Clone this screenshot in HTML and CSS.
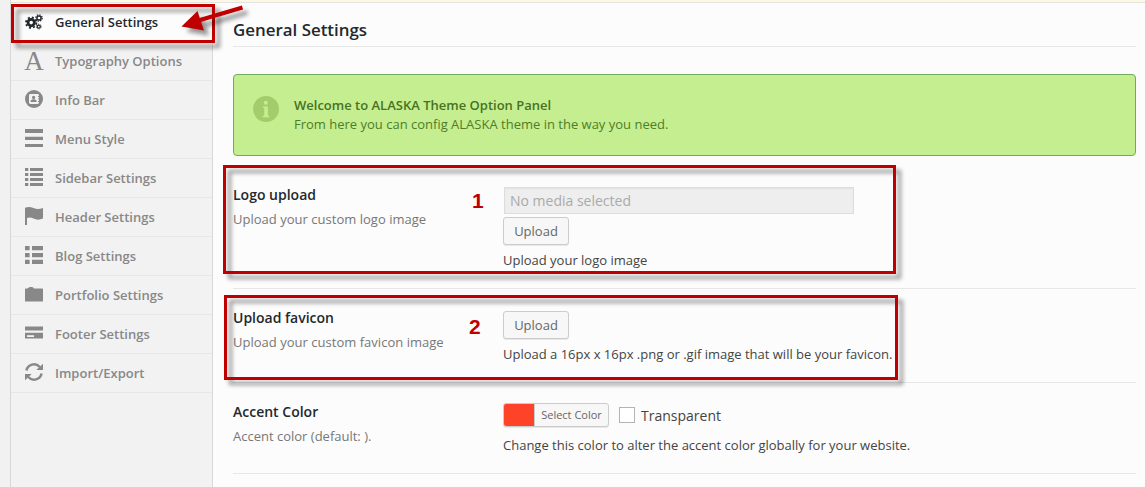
FILE: index.html
```html
<!DOCTYPE html>
<html lang="en">
<head>
<meta charset="utf-8">
<title>General Settings</title>
<link rel="stylesheet" href="styles.css">
</head>
<body>
<div class="page">
  <div class="notice-bar"></div>
  <div class="panel">
    <nav class="sidebar">
      <a class="item active"><svg class="icon" viewBox="0 0 18 18"><g fill="none" stroke="currentColor"><circle cx="6.2" cy="9.6" r="3.2" stroke-width="2.8"/><circle cx="6.2" cy="9.6" r="5.2" stroke-width="1.8" stroke-dasharray="2.05 2.034"/><circle cx="14" cy="5" r="2.1" stroke-width="1.5"/><circle cx="14" cy="5" r="3.2" stroke-width="1.3" stroke-dasharray="1.25 1.263"/><circle cx="13.8" cy="13.6" r="1.5" stroke-width="1.3"/><circle cx="13.8" cy="13.6" r="2.4" stroke-width="1" stroke-dasharray=".95 .935"/></g></svg><span>General Settings</span></a>
      <a class="item"><span class="icon letter">A</span><span>Typography Options</span></a>
      <a class="item"><svg class="icon raised" viewBox="0 0 18 18"><circle cx="9" cy="9" r="9" fill="currentColor"/><rect x="4" y="4" width="10" height="10" rx="1.4" fill="#f2f2f2"/><rect x="5.3" y="5.3" width="7" height="7.4" fill="#f2f2f2"/><circle cx="8.6" cy="7.4" r="1.6" fill="currentColor"/><path d="M5.6 12V10.4L7.7 9.2H9.5L11.6 10.4V12Z" fill="currentColor"/><path d="M13 6.5H15M13 9H15M13 11.5H15" stroke="currentColor"/></svg><span>Info Bar</span></a>
      <a class="item"><svg class="icon raised" viewBox="0 0 18 18" fill="currentColor"><path d="M0 0H18V4H0ZM0 7.7H18V11H0ZM0 15H18V18H0Z"/></svg><span>Menu Style</span></a>
      <a class="item"><svg class="icon raised" viewBox="0 0 18 18" fill="currentColor"><path d="M0 0H3.3V3H0ZM5 0H18V3H5ZM0 5H3.3V8H0ZM5 5H18V8H5ZM0 10H3.3V13H0ZM5 10H18V13H5ZM0 15H3.3V18H0ZM5 15H18V18H5Z"/></svg><span>Sidebar Settings</span></a>
      <a class="item"><svg class="icon raised" viewBox="0 0 18 18" fill="currentColor"><path d="M0 0.8C3-.4 5.5-.2 8.5 1.1C12 2.6 14.5 2.3 18 1V11.5C14.5 13 11.5 13 8.5 11.5C6 10.3 4.3 10 2 11V18H0Z"/></svg><span>Header Settings</span></a>
      <a class="item"><svg class="icon raised" viewBox="0 0 18 18" fill="currentColor"><path d="M0 0H4.6V4.2H0ZM7 0H18V4.2H7ZM0 7H4.6V11.2H0ZM7 7H18V11.2H7ZM0 13.8H4.6V18H0ZM7 13.8H18V18H7Z"/></svg><span>Blog Settings</span></a>
      <a class="item"><svg class="icon" viewBox="0 -1 18 18" fill="currentColor"><path d="M0 2.2Q0 1.5 .8 1.5H2.5L3.8.4Q4.2 0 5 0H7Q7.8 0 8.2.6L9 1.5H17.3Q18 1.5 18 2.3V14Q18 14.5 17.4 14.5H.6Q0 14.5 0 14Z"/></svg><span>Portfolio Settings</span></a>
      <a class="item"><svg class="icon raised" viewBox="0 0 18 18"><path d="M0 2.6H18V6.5H0ZM0 8.7H18V14.5H0Z" fill="currentColor"/><path d="M2 11.2H9V13H2Z" fill="#f2f2f2"/></svg><span>Footer Settings</span></a>
      <a class="item"><svg class="icon raised" viewBox="0 0 18 18"><path d="M1.4 7.5A7.7 7.7 0 0 1 14.7 4M16.6 10.5A7.7 7.7 0 0 1 3.3 14" fill="none" stroke="currentColor" stroke-width="2.5"/><path d="M18 .8V7H11.3ZM0 17.2V11H6.7Z" fill="currentColor"/></svg><span>Import/Export</span></a>
    </nav>
    <main class="main">
      <h1>General Settings</h1>
      <div class="welcome">
        <svg class="info" viewBox="0 0 26 26"><circle cx="13" cy="13" r="13" fill="#a3cc6b"/><circle cx="12.8" cy="6.7" r="2" fill="#c5ee91"/><path d="M9.8 10.4H14.8V19.5L16.3 20V21.2H9.6V20L11.3 19.5V12L9.8 11.6Z" fill="#c5ee91"/></svg>
        <div><strong>Welcome to ALASKA Theme Option Panel</strong><p>From here you can config ALASKA theme in the way you need.</p></div>
      </div>
      <section class="row logo">
        <div><h2>Logo upload</h2><p class="sub">Upload your custom logo image</p></div>
        <div class="field"><div class="media">No media selected</div><button class="upload">Upload</button><p class="desc">Upload your logo image</p></div>
      </section>
      <section class="row favicon">
        <div><h2>Upload favicon</h2><p class="sub">Upload your custom favicon image</p></div>
        <div class="field"><button class="upload">Upload</button><p class="desc">Upload a 16px x 16px .png or .gif image that will be your favicon.</p></div>
      </section>
      <section class="row accent">
        <div><h2>Accent Color</h2><p class="sub">Accent color (default: ).</p></div>
        <div class="field"><div class="picker"><button class="color"><i class="swatch"></i><span>Select Color</span></button><i class="check"></i><span>Transparent</span></div><p class="desc">Change this color to alter the accent color globally for your website.</p></div>
      </section>
    </main>
  </div>
  <div class="mark mark-nav"></div>
  <div class="mark mark-logo"></div>
  <div class="mark mark-favicon"></div>
  <svg class="arrow" viewBox="0 0 70 34"><path d="M62.5 5.5L20 18" stroke="#c00000" stroke-width="4.4"/><path d="M1.5 24.5L17.5 9L24 28.5Z" fill="#c00000"/></svg>
  <b class="num one">1</b>
  <b class="num two">2</b>
</div>
</body>
</html>
```
FILE: styles.css
```css
* { box-sizing: border-box; }
body { margin: 0; background: #f1f1f1; font: 13px/19px "Open Sans", sans-serif; color: #444; }
h1, h2, p { margin: 0; }
.page { position: relative; height: 487px; overflow: hidden; padding-left: 10px; display: flex; flex-direction: column; }
.notice-bar { height: 3px; flex: none; background: #fcf8e3; border-bottom: 1px solid #e3e3e3; border-left: 1px solid #d8d8d8; }
.panel { flex: 1; display: flex; border-left: 1px solid #d8d8d8; background: #fcfcfc; }
.sidebar { width: 202px; flex: none; background: #f2f2f2; border-right: 1px solid #d8d8d8; }
.item { height: 39px; display: flex; align-items: center; gap: 12px; padding-left: 14px; border-bottom: 1px solid #e7e7e7; color: #888; font-weight: 600; }
.item.active { background: #fcfcfc; color: #23282d; width: 202px; }
.icon { width: 18px; height: 18px; flex: none; }
.raised { margin-bottom: 2px; }
.letter { font: 27px/18px "Liberation Serif", serif; display: flex; justify-content: center; align-items: center; }
.main { flex: 1; padding: 0 9px 0 20px; }
h1 { height: 44px; padding-top: 16px; font-size: 16.9px; line-height: 22px; font-weight: 600; color: #23282d; border-bottom: 1px solid #e7e7e7; }
.welcome { display: flex; gap: 15px; height: 82px; margin-top: 27px; padding: 21px 19px 0; border: 1px solid #6eac5c; border-radius: 4px; background: #c5ee91; color: #4f7d26; }
.info { width: 26px; height: 26px; flex: none; }
.welcome strong { display: block; font-weight: 600; color: #467321; }
.row { display: grid; grid-template-columns: 270px 1fr; border-bottom: 1px solid #e7e7e7; }
.logo { height: 133px; padding-top: 31px; }
.favicon { height: 94px; padding-top: 22px; }
.favicon h2 { margin-top: -1px; }
.accent { height: 91px; padding-top: 20px; }
.accent h2 { margin-top: 1px; }
h2 { font-size: 14px; line-height: 16px; font-weight: 600; color: #23282d; }
.sub { margin-top: 7px; color: #777; letter-spacing: .02px; }
.accent .sub { letter-spacing: 0; }
.field { display: flex; flex-direction: column; align-items: flex-start; }
.media { width: 350px; height: 27px; margin: 0 0 3px 1px; padding-left: 5px; border: 1px solid #ddd; background: #eee; color: #aaa; font-size: 14px; line-height: 25px; box-shadow: inset 0 1px 2px rgba(0,0,0,.05); }
.upload { width: 66px; height: 28px; padding: 0; border: 1px solid #ccc; border-radius: 3px; background: #f7f7f7; box-shadow: 0 1px 0 rgba(0,0,0,.08); color: #666; font: 13px/26px "Open Sans", sans-serif; }
.desc { margin-top: 6px; }
.accent .desc { margin-top: 9px; }
.picker { display: flex; align-items: center; height: 24px; font-size: 14px; }
.color { display: flex; width: 106px; height: 24px; padding: 0; border: 1px solid #ccc; border-radius: 3px; overflow: hidden; background: #f7f7f7; box-shadow: 0 1px 0 rgba(0,0,0,.08); color: #666; font: 11px/22px "Open Sans", sans-serif; }
.swatch { width: 30px; height: 22px; background: #ff4328; }
.color span { flex: 1; border-left: 1px solid #ccc; }
.check { width: 16px; height: 16px; margin: 0 6px 0 10px; border: 1px solid #b4b4b4; background: #fff; }
.mark { position: absolute; border: 3px solid #c00000; filter: drop-shadow(5px 5px 2px rgba(0,0,0,.42)); }
.mark-nav { left: 11px; top: 4px; width: 204px; height: 39px; }
.mark-logo { left: 223px; top: 165px; width: 673px; height: 109px; }
.mark-favicon { left: 224px; top: 295px; width: 674px; height: 85px; }
.arrow { position: absolute; left: 180px; top: 2px; width: 70px; height: 34px; overflow: visible; filter: drop-shadow(5px 5px 2px rgba(0,0,0,.42)); }
.num { position: absolute; font: bold 21px/24px "Liberation Sans", sans-serif; color: #c00000; }
.one { left: 472px; top: 189px; }
.two { left: 469px; top: 315px; }
```
